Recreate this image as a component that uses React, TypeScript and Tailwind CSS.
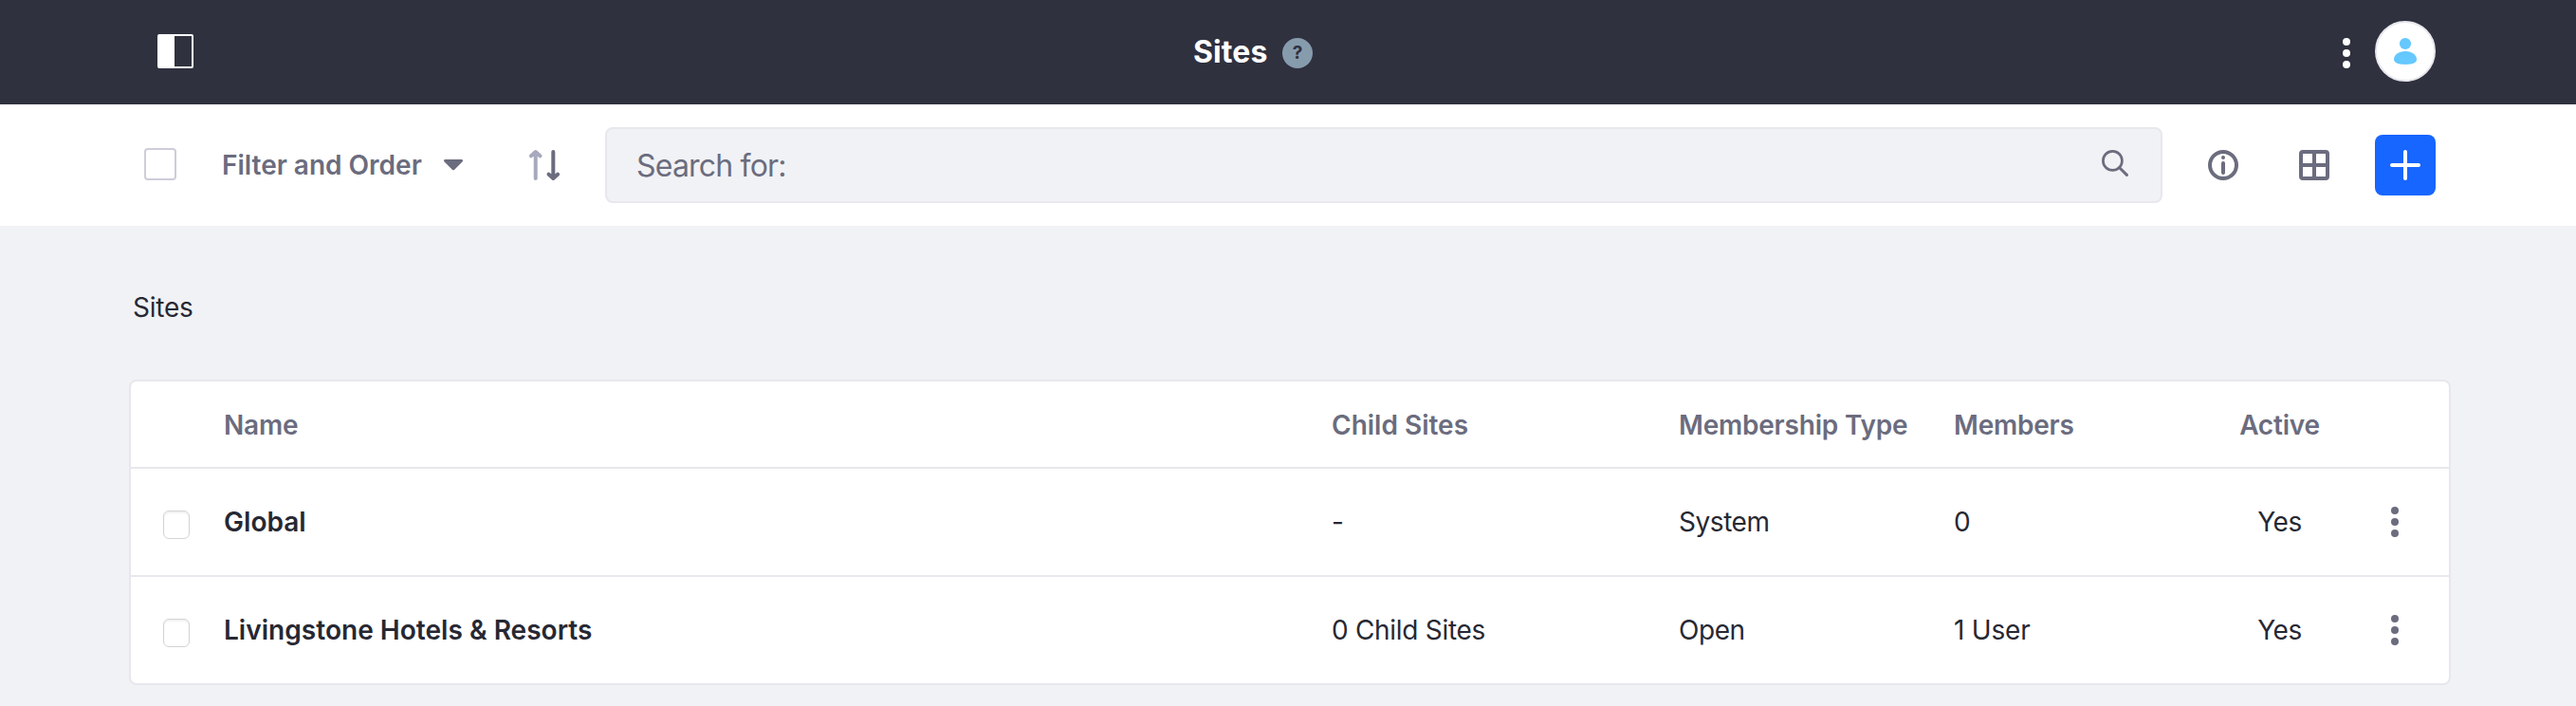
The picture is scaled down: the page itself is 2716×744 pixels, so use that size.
import React from 'react';

const rows = [
  { name: 'Global', child: '-', type: 'System', members: '0', active: 'Yes' },
  { name: 'Livingstone Hotels & Resorts', child: '0 Child Sites', type: 'Open', members: '1 User', active: 'Yes' },
];

const cols = 'grid grid-cols-[98px_1168px_366px_290px_293px_101px_126px] items-center';

function Kebab({ className }: { className: string }) {
  return (
    <svg viewBox="0 0 32 32" className={`size-8 fill-current ${className}`}>
      <circle cx="16" cy="4" r="4" />
      <circle cx="16" cy="16" r="4" />
      <circle cx="16" cy="28" r="4" />
    </svg>
  );
}

function Header() {
  return (
    <header className="flex h-[110px] items-center bg-[#30313f] pl-[166px] pr-[148px] text-white">
      <div className="mb-0.5 flex h-9 w-[38px] rounded-[2px] border-2 border-white">
        <div className="w-4 bg-white" />
      </div>
      <div className="ml-[1054px] flex flex-1 items-center">
        <h1 className="w-[94px] text-[32px] leading-10 font-[650] tracking-[0.1px] whitespace-nowrap">Sites</h1>
        <span className="mt-0.5 flex size-8 items-center justify-center rounded-full bg-[#869cad] text-[19px] font-bold text-[#30313f]">
          ?
        </span>
      </div>
      <Kebab className="mt-0.5 mr-[14px] text-white" />
      <div className="mb-0.5 flex size-16 items-center justify-center rounded-full border-2 border-[#e7e7ed] bg-white">
        <svg viewBox="0 0 32 32" className="size-8 fill-[#65c8ff]">
          <circle cx="16" cy="8" r="6.1" />
          <path d="M16 16c-7 0-12 3.600-12 8.600C4 28.800 9.600 30 16 30s12-1.200 12-5.400C28 19.600 23 16 16 16Z" />
        </svg>
      </div>
    </header>
  );
}

function Toolbar() {
  return (
    <div className="flex h-32 items-center bg-white pl-[152px] pr-[148px] text-[#6b6c7e]">
      <div className="mb-0.5 size-[34px] rounded border-2 border-[#cdced9]" />
      <span className="ml-12 w-[234px] text-[28px] leading-[42px] font-semibold whitespace-nowrap">Filter and Order</span>
      <svg viewBox="0 0 20 12" className="h-3 w-5 fill-current">
        <path d="M1.500 0h17c1.400 0 2 1.500 1 2.500l-8.300 8.200a1.700 1.700 0 0 1-2.400 0L.5 2.500C-.5 1.500.1 0 1.500 0Z" />
      </svg>
      <svg viewBox="0 0 32 32" className="ml-[70px] size-8" fill="none" strokeWidth="4" strokeLinecap="round" strokeLinejoin="round">
        <path d="M6.700 30V3M2 6.300l4.700-4.200 4.700 4.200" stroke="#a7a9bc" />
        <path d="M25.300 2v27M20.600 25.700l4.700 4.200 4.700-4.200" stroke="#6b6c7e" />
      </svg>
      <div className="ml-12 flex h-20 flex-1 items-center justify-between rounded-lg border-2 border-[#e7e7ed] bg-[#f1f2f5] pr-[34px] pl-[31px]">
        <span className="pt-0.5 text-[32px] leading-10 tracking-[-0.8px] whitespace-nowrap">Search for:</span>
        <svg viewBox="0 0 28 28" className="mb-1 size-7" fill="none" stroke="currentColor">
          <circle cx="11.400" cy="11.400" r="10" strokeWidth="2.700" />
          <path d="m18.700 18.700 7.700 7.700" strokeWidth="3" strokeLinecap="round" />
        </svg>
      </div>
      <svg viewBox="0 0 32 32" className="ml-12 size-8" fill="none" stroke="currentColor">
        <circle cx="16" cy="16" r="14" strokeWidth="4" />
        <circle cx="16" cy="8" r="2" fill="currentColor" stroke="none" />
        <path d="M16 14v10" strokeWidth="4" strokeLinecap="round" />
      </svg>
      <svg viewBox="0 0 32 32" className="ml-16 size-8" fill="none" stroke="currentColor" strokeWidth="4">
        <rect x="2" y="2" width="28" height="28" rx="2" />
        <path d="M16 2v28M2 16h28" />
      </svg>
      <button className="ml-12 flex size-16 items-center justify-center rounded-lg bg-[#1766ff]">
        <svg viewBox="0 0 32 32" className="size-8" stroke="white" strokeWidth="4" strokeLinecap="round">
          <path d="M16 2v28M2 16h28" />
        </svg>
      </button>
    </div>
  );
}

function SitesTable() {
  return (
    <div className="w-[2448px] overflow-hidden rounded-lg border-2 border-[#e7e7ed] bg-white text-[28px] leading-[42px] whitespace-nowrap text-[#272833]">
      <div className={`${cols} h-[90px] pt-0.5 font-semibold tracking-[-0.2px] text-[#6b6c7e]`}>
        <span />
        <span>Name</span>
        <span className="tracking-normal">Child Sites</span>
        <span>Membership Type</span>
        <span>Members</span>
        <span className="text-center">Active</span>
        <span />
      </div>
      {rows.map((row) => (
        <div key={row.name} className={`${cols} h-[114px] border-t-2 border-[#e7e7ed]`}>
          <div className="mt-[5px] ml-[34px] h-[30px] w-7 rounded-md border border-[#d4d4d6] bg-white shadow-[inset_0_2px_2px_rgba(0,0,0,0.06)]" />
          <span className="font-semibold tracking-[0.04px]">{row.name}</span>
          <span className="tracking-[-0.3px]">{row.child}</span>
          <span className="tracking-[-0.45px]">{row.type}</span>
          <span className="tracking-[-0.2px]">{row.members}</span>
          <span className="text-center tracking-[-0.5px]">{row.active}</span>
          <Kebab className="ml-[55px] text-[#6b6c7e]" />
        </div>
      ))}
    </div>
  );
}

export default function App() {
  return (
    <div className="h-[744px] w-[2716px] overflow-hidden bg-[#f1f2f5] font-['Inter',sans-serif]">
      <Header />
      <Toolbar />
      <main className="pt-[65px] pl-[136px]">
        <h2 className="mb-[55px] pl-1 text-[28px] leading-[42px] tracking-[-0.25px] text-[#272833]">Sites</h2>
        <SitesTable />
      </main>
    </div>
  );
}
